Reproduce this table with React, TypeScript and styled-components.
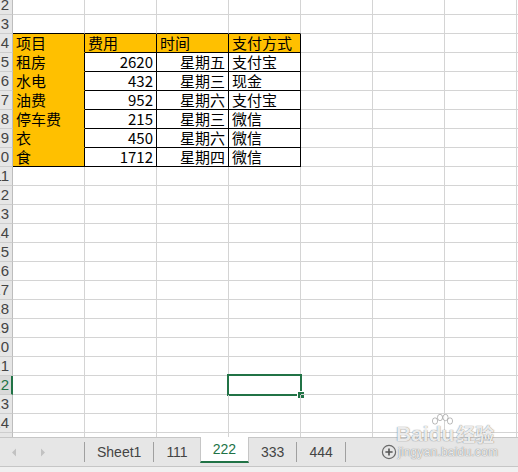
import React from "react";
import styled, { createGlobalStyle, css } from "styled-components";

const GlobalStyle = createGlobalStyle`
  html, body { margin: 0; padding: 0; background: #ffffff; overflow: hidden; }
  body { font-family: "Noto Sans CJK SC", "Noto Sans", sans-serif; }
  * { box-sizing: border-box; }
`;

const GREEN = "#217346";
const YELLOW = "#ffc000";
const GRID = "#d4d4d4";

const Page = styled.div`
  position: relative;
  width: 518px;
  height: 472px;
  display: flex;
  flex-direction: column;
  overflow: hidden;
`;

const Sheet = styled.div`
  height: 437px;
  flex: none;
  overflow: hidden;
`;

const GridBody = styled.div`
  margin-top: -4px;
  display: flex;
  flex-direction: column;
`;

const Row = styled.div`
  display: flex;
  height: 19px;
  flex: none;
`;

const RowHeader = styled.div<{ $active?: boolean }>`
  width: 13px;
  flex: none;
  display: flex;
  justify-content: flex-end;
  align-items: flex-end;
  overflow: hidden;
  background: ${(p) => (p.$active ? "#d9d9d9" : "#e6e6e6")};
  border-right: ${(p) => (p.$active ? `2px solid ${GREEN}` : "1px solid #bdbdbd")};
  border-bottom: 1px solid #cdcdcd;
  color: ${(p) => (p.$active ? GREEN : "#444444")};
  font-family: "Liberation Sans", "Noto Sans", sans-serif;
  font-size: 15px;
  line-height: 18px;
  white-space: nowrap;
  padding-right: ${(p) => (p.$active ? "2px" : "3px")};
`;

type Edge = "grid" | "black" | "yellow";

const edgeColor = (e: Edge) => (e === "black" ? "#000000" : e === "yellow" ? YELLOW : GRID);

const Cell = styled.div<{
  $fill?: boolean;
  $right: Edge;
  $bottom: Edge;
  $align: "left" | "right";
  $selected?: boolean;
}>`
  position: relative;
  width: 72px;
  flex: none;
  display: flex;
  align-items: flex-end;
  justify-content: ${(p) => (p.$align === "right" ? "flex-end" : "flex-start")};
  padding: 0 3px 0 3px;
  background: ${(p) => (p.$fill ? YELLOW : "transparent")};
  border-right: 1px solid ${(p) => edgeColor(p.$right)};
  border-bottom: 1px solid ${(p) => edgeColor(p.$bottom)};
  color: #000000;
  font-family: "Noto Sans CJK SC", "Noto Sans", sans-serif;
  font-size: 15px;
  line-height: 18px;
  white-space: nowrap;
  ${(p) =>
    p.$selected &&
    css`
      &::before {
        content: "";
        position: absolute;
        top: -2px;
        left: -2px;
        right: -2px;
        bottom: -2px;
        border: 2px solid ${GREEN};
      }
      &::after {
        content: "";
        position: absolute;
        width: 6px;
        height: 6px;
        right: -5px;
        bottom: -5px;
        background: ${GREEN};
        border: 1px solid #ffffff;
      }
    `}
`;

const TabBar = styled.div`
  height: 29px;
  flex: none;
  display: flex;
  align-items: stretch;
  background: #e6e6e6;
  border-top: 1px solid #c6c6c6;
`;

const NavArea = styled.div`
  width: 84px;
  flex: none;
  display: flex;
  align-items: center;
  padding-left: 11px;
  gap: 23px;
`;

const Arrow = styled.svg`
  width: 6px;
  height: 9px;
  display: block;
`;

const Sep = styled.div`
  width: 1px;
  flex: none;
  margin: 4px 0 4px 0;
  background: #a0a0a0;
`;

const Tab = styled.div<{ $active?: boolean }>`
  flex: none;
  display: flex;
  align-items: center;
  justify-content: center;
  padding: 0 12px 1px;
  font-family: "Liberation Sans", "Noto Sans", sans-serif;
  font-size: 14px;
  color: #444444;
  ${(p) =>
    p.$active &&
    css`
      margin: -1px 0 3px;
      padding-bottom: 0;
      background: #ffffff;
      color: ${GREEN};
      border-left: 1px solid #c6c6c6;
      border-right: 1px solid #c6c6c6;
      border-bottom: 2px solid ${GREEN};
    `}
`;

const AddButton = styled.svg`
  width: 16px;
  height: 16px;
  display: block;
  align-self: center;
  margin-left: 35px;
`;

const BottomStrip = styled.div`
  flex: 1;
  background: #f0f0f0;
  border-top: 1px solid #c6c6c6;
`;

const Watermark = styled.div`
  position: absolute;
  left: 396px;
  top: 416px;
  display: flex;
  flex-direction: column;
  align-items: flex-start;
  pointer-events: none;
  color: rgba(255, 255, 255, 0.85);
  text-shadow: 0 0 1px rgba(90, 90, 90, 0.55), 0 0 1px rgba(90, 90, 90, 0.55);
`;

const MarkTop = styled.div`
  position: relative;
  display: flex;
  align-items: flex-end;
  font-family: "Liberation Sans", "Noto Sans CJK SC", sans-serif;
  font-weight: bold;
  font-size: 21px;
  line-height: 24px;
  padding-top: 6px;
`;

const MarkCn = styled.span`
  font-family: "Noto Sans CJK SC", sans-serif;
  font-size: 19px;
  margin-left: 2px;
`;

const Paw = styled.svg`
  position: absolute;
  left: 30px;
  top: -2px;
  width: 30px;
  height: 18px;
`;

const MarkSub = styled.div`
  font-family: "Liberation Sans", sans-serif;
  font-size: 12px;
  line-height: 13px;
  letter-spacing: 0.2px;
  margin-left: 2px;
`;

type CellData = { text?: string; align?: "left" | "right" };

const table: Record<number, CellData[]> = {
  4: [{ text: "项目" }, { text: "费用" }, { text: "时间" }, { text: "支付方式" }],
  5: [{ text: "租房" }, { text: "2620", align: "right" }, { text: "星期五", align: "right" }, { text: "支付宝" }],
  6: [{ text: "水电" }, { text: "432", align: "right" }, { text: "星期三", align: "right" }, { text: "现金" }],
  7: [{ text: "油费" }, { text: "952", align: "right" }, { text: "星期六", align: "right" }, { text: "支付宝" }],
  8: [{ text: "停车费" }, { text: "215", align: "right" }, { text: "星期三", align: "right" }, { text: "微信" }],
  9: [{ text: "衣" }, { text: "450", align: "right" }, { text: "星期六", align: "right" }, { text: "微信" }],
  10: [{ text: "食" }, { text: "1712", align: "right" }, { text: "星期四", align: "right" }, { text: "微信" }],
};

const rows = Array.from({ length: 24 }, (_, i) => i + 2);
const cols = Array.from({ length: 8 }, (_, i) => i);

function cellStyle(r: number, c: number) {
  let fill = false;
  let right: Edge = "grid";
  let bottom: Edge = "grid";
  if (r === 3 && c <= 3) bottom = "black";
  if (r >= 4 && r <= 10 && c === 0) {
    fill = true;
    right = "black";
    bottom = r < 10 ? "yellow" : "black";
  }
  if (r >= 4 && r <= 10 && c >= 1 && c <= 3) {
    right = "black";
    bottom = "black";
    fill = r === 4;
  }
  return { fill, right, bottom };
}

const tabs = [
  { name: "Sheet1" },
  { name: "111" },
  { name: "222", active: true },
  { name: "333" },
  { name: "444" },
];

export default function App() {
  return (
    <Page>
      <GlobalStyle />
      <Sheet>
        <GridBody>
          {rows.map((r) => (
            <Row key={r}>
              <RowHeader $active={r === 22}>{r}</RowHeader>
              {cols.map((c) => {
                const s = cellStyle(r, c);
                const d = table[r]?.[c];
                return (
                  <Cell
                    key={c}
                    $fill={s.fill}
                    $right={s.right}
                    $bottom={s.bottom}
                    $align={d?.align ?? "left"}
                    $selected={r === 22 && c === 3}
                  >
                    {d?.text}
                  </Cell>
                );
              })}
            </Row>
          ))}
        </GridBody>
      </Sheet>
      <TabBar>
        <NavArea>
          <Arrow viewBox="0 0 6 9">
            <path d="M5 0.5 L1 4.5 L5 8.5 Z" fill="#c2c2c2" />
          </Arrow>
          <Arrow viewBox="0 0 6 9">
            <path d="M1 0.5 L5 4.5 L1 8.5 Z" fill="#c2c2c2" />
          </Arrow>
        </NavArea>
        <Sep />
        {tabs.map((t, i) => {
          const next = tabs[i + 1];
          const showSep = !t.active && !(next && next.active);
          return (
            <React.Fragment key={t.name}>
              <Tab $active={t.active}>{t.name}</Tab>
              {showSep && <Sep />}
            </React.Fragment>
          );
        })}
        <AddButton viewBox="0 0 16 16">
          <circle cx="8" cy="8" r="6.6" fill="none" stroke="#6a6a6a" strokeWidth="1.2" />
          <path d="M8 4.4 V11.6 M4.4 8 H11.6" stroke="#555555" strokeWidth="1.6" />
        </AddButton>
      </TabBar>
      <BottomStrip />
      <Watermark>
        <MarkTop>
          <span>Bai</span>
          <span>du</span>
          <MarkCn>经验</MarkCn>
          <Paw viewBox="0 0 30 18">
            <g fill="rgba(255,255,255,0.85)" stroke="rgba(90,90,90,0.5)" strokeWidth="0.8">
              <ellipse cx="9" cy="7" rx="2.6" ry="3.2" />
              <ellipse cx="14" cy="3.5" rx="2.6" ry="3.2" />
              <ellipse cx="19.5" cy="3.5" rx="2.6" ry="3.2" />
              <ellipse cx="24" cy="7" rx="2.6" ry="3.2" />
            </g>
          </Paw>
        </MarkTop>
        <MarkSub>jingyan.baidu.com</MarkSub>
      </Watermark>
    </Page>
  );
}
